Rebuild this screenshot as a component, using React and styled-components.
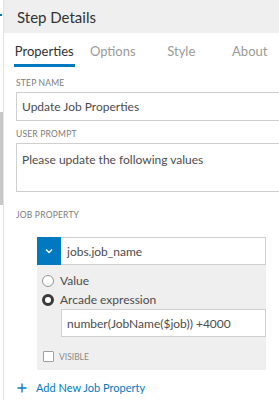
import React from 'react'
import styled, { createGlobalStyle } from 'styled-components'

const Global = createGlobalStyle`
  html, body {
    margin: 0;
    padding: 0;
    background: #fff;
  }
  body {
    font-family: "Lato", "Open Sans", sans-serif;
    color: #4c4c4c;
  }
`

const Page = styled.div`
  display: flex;
  width: 279px;
  height: 400px;
  overflow: hidden;
  background: #fff;
`

const Rail = styled.div`
  width: 3px;
  display: flex;
  flex-direction: column;
  flex-shrink: 0;
`

const Tick = styled.div`
  margin-top: 14px;
  height: 2px;
  width: 2px;
  background: #0079c1;
`

const Thumb = styled.div`
  margin-top: 96px;
  height: 93px;
  width: 3px;
  background: #c8c8c8;
`

const Panel = styled.div`
  flex: 1;
  min-width: 0;
  display: flex;
  flex-direction: column;
  border-left: 1px solid #e2e2e2;
`

const Header = styled.div`
  height: 33px;
  background: #efefef;
  display: flex;
  align-items: center;
  padding-left: 13px;
  font-size: 15px;
  color: #323232;
`

const Tabs = styled.div`
  height: 34px;
  display: grid;
  grid-template-columns: repeat(4, 68.5px);
  padding-left: 6px;
`

const Tab = styled.div`
  display: flex;
  justify-content: center;
  align-items: flex-end;
`

const TabLabel = styled.span`
  font-size: 13px;
  padding: 0 1px 5px;
  color: ${p => (p.active ? '#323232' : '#9a9a9a')};
  border-bottom: 3px solid ${p => (p.active ? '#0079c1' : 'transparent')};
`

const Body = styled.div`
  padding: 0 0 0 12px;
  display: flex;
  flex-direction: column;
`

const Label = styled.div`
  font-size: 8.5px;
  text-transform: uppercase;
  color: #7a7a7a;
  letter-spacing: 0.2px;
  margin-top: ${p => p.top}px;
  margin-bottom: ${p => p.bottom}px;
  line-height: 10px;
`

const Field = styled.div`
  box-sizing: border-box;
  margin-right: -20px;
  height: ${p => p.h}px;
  border: 1px solid #cfcfcf;
  padding: ${p => (p.area ? '8px 5px' : '0 5px')};
  display: flex;
  align-items: ${p => (p.area ? 'flex-start' : 'center')};
  font-size: 12px;
  color: #4c4c4c;
`

const JobBox = styled.div`
  margin-left: 21px;
  width: 229px;
  display: flex;
  flex-direction: column;
`

const SelectRow = styled.div`
  display: flex;
  height: 28px;
  box-sizing: border-box;
  border: 1px solid #cfcfcf;
  border-left: none;
`

const Chevron = styled.div`
  width: 24px;
  margin-top: -1px;
  margin-bottom: -1px;
  background: #0079c1;
  display: flex;
  align-items: center;
  justify-content: center;
`

const SelectText = styled.div`
  display: flex;
  align-items: center;
  padding-left: 6px;
  font-size: 12px;
`

const Options = styled.div`
  background: #efefef;
  padding: 6px 0 8px 5px;
  display: flex;
  flex-direction: column;
`

const RadioRow = styled.div`
  display: flex;
  align-items: center;
  gap: 6px;
  height: 19px;
  font-size: 12px;
  color: #4c4c4c;
`

const Radio = styled.span`
  box-sizing: border-box;
  width: 12px;
  height: 12px;
  border-radius: 50%;
  background: #fff;
  border: ${p => (p.checked ? '3.5px solid #3a3a3a' : '1px solid #949494')};
`

const ExprInput = styled.div`
  box-sizing: border-box;
  margin: 0 0 0 19px;
  height: 28px;
  background: #fff;
  border: 1px solid #cfcfcf;
  display: flex;
  align-items: center;
  padding-left: 5px;
  font-size: 12px;
`

const CheckRow = styled.div`
  display: flex;
  align-items: center;
  gap: 5px;
  margin: 14px 0 0 1px;
  font-size: 8.5px;
  color: #8a8a8a;
  text-transform: uppercase;
`

const Check = styled.span`
  box-sizing: border-box;
  width: 11px;
  height: 11px;
  background: #fff;
  border: 1px solid #a0a0a0;
  border-radius: 1px;
`

const AddLink = styled.div`
  display: flex;
  align-items: center;
  gap: 9px;
  margin-top: 11px;
  padding-left: 1px;
  font-size: 11px;
  color: #0079c1;
`

export default function App() {
  return (
    <>
      <Global />
      <Page>
        <Rail>
          <Tick />
          <Thumb />
        </Rail>
        <Panel>
          <Header>Step Details</Header>
          <Tabs>
            <Tab><TabLabel active>Properties</TabLabel></Tab>
            <Tab><TabLabel>Options</TabLabel></Tab>
            <Tab><TabLabel>Style</TabLabel></Tab>
            <Tab><TabLabel>About</TabLabel></Tab>
          </Tabs>
          <Body>
            <Label top={11} bottom={4}>Step Name</Label>
            <Field h={29}>Update Job Properties</Field>
            <Label top={8} bottom={4}>User Prompt</Label>
            <Field h={49} area>Please update the following values</Field>
            <Label top={18} bottom={17}>Job Property</Label>
            <JobBox>
              <SelectRow>
                <Chevron>
                  <svg width="8" height="6" viewBox="0 0 8 6">
                    <path d="M1 1.5 L4 4.5 L7 1.5" fill="none" stroke="#fff" strokeWidth="1.3" />
                  </svg>
                </Chevron>
                <SelectText>jobs.job_name</SelectText>
              </SelectRow>
              <Options>
                <RadioRow><Radio />Value</RadioRow>
                <RadioRow><Radio checked />Arcade expression</RadioRow>
                <ExprInput>number(JobName($job)) +4000</ExprInput>
                <CheckRow><Check />Visible</CheckRow>
              </Options>
            </JobBox>
            <AddLink>
              <svg width="10" height="10" viewBox="0 0 10 10">
                <path d="M5 0.5 V9.5 M0.5 5 H9.5" stroke="#0079c1" strokeWidth="1.3" fill="none" />
              </svg>
              Add New Job Property
            </AddLink>
          </Body>
        </Panel>
      </Page>
    </>
  )
}
